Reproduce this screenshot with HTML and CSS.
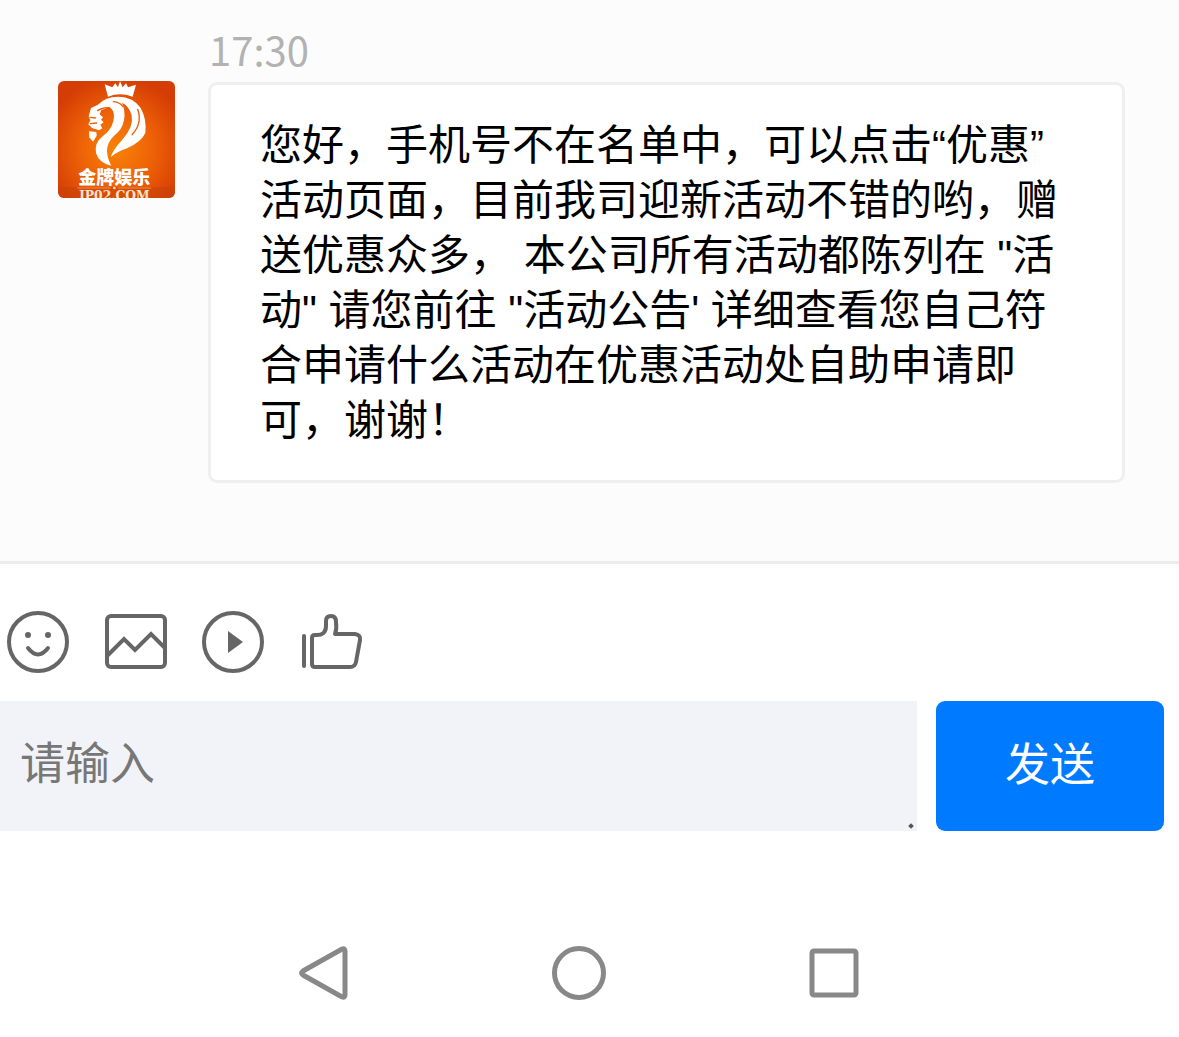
FILE: index.html
```html
<!DOCTYPE html>
<html lang="zh-CN">
<head>
<meta charset="utf-8">
<meta name="viewport" content="width=device-width, initial-scale=1">
<title>在线客服</title>
<link rel="stylesheet" href="styles.css">
</head>
<body>
<main class="chat">
  <article class="message">
    <svg class="avatar" viewBox="24 27 351 351" role="img" aria-label="金牌娱乐">
      <defs>
        <radialGradient id="glow" cx="50%" cy="58%" r="62%">
          <stop offset="0" stop-color="#f98208"/>
          <stop offset="0.5" stop-color="#ee6207"/>
          <stop offset="1" stop-color="#d43d05"/>
        </radialGradient>
      </defs>
      <rect x="24" y="27" width="351" height="351" fill="url(#glow)"/>
      <path d="M24 345H375V378H24Z" fill="#c94308" opacity=".6"/>
      <g fill="#fff">
        <path d="M174 74L164 37L187 46L196 34L204 46L210 27L218 46L228 34L234 46L258 38L248 74Q210 60 174 74Z"/>
        <path d="M116 133L123 108L144 98Q166 74 205 74Q250 75 272 108Q291 143 286 183Q274 210 231 229Q202 239 182 255Q191 230 217 203Q252 164 245 130Q237 101 216 92Q227 117 222 145Q217 172 194 190Q171 211 171 237Q172 260 184 281Q148 275 138 244Q132 213 158 193Q183 175 190 148Q197 119 179 105L154 114L149 127L159 136L153 143L161 151L151 158L157 169L147 175L126 168L115 157L121 145Z"/>
        <path d="M117 178L139 180L140 191L129 209L118 196Z"/>
      </g>
      <g fill="none" stroke="#e85f08" stroke-width="4" stroke-linecap="round">
        <path d="M143 116Q157 106 176 107M121 136L136 138M121 155L140 153M190 89Q211 91 219 104M263 112Q278 155 246 188"/>
      </g>
      <text class="avatar-name" x="193" y="335" text-anchor="middle">金牌娱乐</text>
      <path d="M82 348H182M204 348H304" stroke="#f5b878" stroke-width="2"/>
      <circle cx="193" cy="348" r="4" fill="#ffe4bd"/>
      <text class="avatar-site" x="193" y="383" text-anchor="middle">JP02.COM</text>
    </svg>
    <div class="message-main">
      <time class="message-time" datetime="17:30">17:30</time>
      <p class="bubble">您好，手机号不在名单中，可以点击“优惠”活动页面，目前我司迎新活动不错的哟，赠送优惠众多， 本公司所有活动都陈列在 "活动" 请您前往 "活动公告' 详细查看您自己符合申请什么活动在优惠活动处自助申请即可，谢谢！</p>
    </div>
  </article>
</main>

<form class="composer">
  <div class="tools">
    <button class="tool" type="button" aria-label="表情">
      <svg viewBox="0 0 64 64"><circle cx="32" cy="32" r="29"/><path d="M22 38Q32 51 42 38" stroke-linecap="round"/><g class="solid"><circle cx="22" cy="25" r="3"/><circle cx="42" cy="25" r="3"/></g></svg>
    </button>
    <button class="tool" type="button" aria-label="图片">
      <svg viewBox="0 0 64 64"><rect x="3" y="6" width="58" height="51" rx="4"/><path d="M3 46L20 29L31 40L47 24L61 38"/></svg>
    </button>
    <button class="tool" type="button" aria-label="视频">
      <svg viewBox="0 0 64 64"><circle cx="31" cy="32" r="29"/><path class="solid" d="M26 21L41 32L26 43Z"/></svg>
    </button>
    <button class="tool" type="button" aria-label="评价">
      <svg viewBox="0 0 64 64"><path d="M4 26V56" stroke-linecap="round"/><path d="M12 28Q12 25 15 25Q26 26 26 16V11Q26 6 31 6Q36 6 36 12Q37 19 35 24H55Q61 25 60 30L56 52Q55 57 50 57H15Q12 57 12 54Z" stroke-linejoin="round"/></svg>
    </button>
  </div>
  <div class="entry">
    <div class="field">
      <textarea class="input" placeholder="请输入" aria-label="请输入" rows="1"></textarea>
      <span class="grip"></span>
    </div>
    <button class="send" type="submit">发送</button>
  </div>
</form>

<nav class="system-nav" aria-label="系统导航">
  <button class="key" type="button" aria-label="返回"><svg viewBox="0 0 56 56"><path d="M47 4Q50 3 50 6V50Q50 53 47 52L8 30Q5 28 8 26Z"/></svg></button>
  <button class="key" type="button" aria-label="主页"><svg viewBox="0 0 56 56"><circle cx="28" cy="28" r="24.500"/></svg></button>
  <button class="key" type="button" aria-label="最近任务"><svg viewBox="0 0 56 56"><rect x="5" y="6" width="44" height="44" rx="2"/></svg></button>
</nav>
</body>
</html>
```

FILE: styles.css
```css
* {
  box-sizing: border-box;
}

body {
  margin: 0;
  background: #fff;
  color: #000;
  font-family: "Noto Sans CJK SC", sans-serif;
}

button {
  padding: 0;
  border: 0;
  background: none;
  font: inherit;
}

svg {
  display: block;
}

.chat {
  padding: 24px 54px 78px 58px;
  border-bottom: 3px solid #ececec;
  background: #fcfcfc;
}

.message {
  display: flex;
  align-items: flex-start;
  gap: 33px;
}

.avatar {
  flex: none;
  width: 117px;
  height: 117px;
  margin-top: 57px;
  border-radius: 6px;
}

.avatar-name {
  fill: #fff;
  font-size: 54px;
  font-weight: 900;
}

.avatar-site {
  fill: #ffe4cc;
  font-family: "DejaVu Serif", serif;
  font-size: 37px;
  font-weight: 700;
}

.message-main {
  flex: 1;
  min-width: 0;
}

.message-time {
  display: block;
  margin-bottom: 8px;
  padding-left: 1px;
  color: #b2b2b2;
  font-size: 40px;
  line-height: 50px;
}

.bubble {
  margin: 0;
  padding: 33px 48px 32px 49px;
  border: 3px solid #efefef;
  border-radius: 9px;
  background: #fff;
  font-family: "Liberation Sans", "Noto Sans CJK SC", sans-serif;
  font-size: 42px;
  line-height: 55px;
}

.composer {
  padding-top: 46px;
}

.tools {
  display: flex;
  gap: 34px;
  padding-left: 6px;
}

.tool svg {
  width: 64px;
  height: 64px;
  fill: none;
  stroke: #666;
  stroke-width: 4;
}

.tool .solid {
  fill: #666;
  stroke: none;
}

.entry {
  display: flex;
  gap: 19px;
  margin-top: 27px;
  padding-right: 15px;
}

.field {
  position: relative;
  display: flex;
  flex: 1;
}

.input {
  flex: 1;
  min-width: 0;
  height: 130px;
  padding: 27px 20px;
  border: 0;
  background: #f2f3f8;
  font: inherit;
  font-size: 45px;
  line-height: 66px;
  resize: none;
}

.input::placeholder {
  color: #777;
}

.grip {
  position: absolute;
  right: 4px;
  bottom: 3px;
  width: 4px;
  height: 4px;
  background: #555;
  transform: rotate(45deg);
}

.send {
  width: 228px;
  padding-bottom: 8px;
  border-radius: 9px;
  background: #007aff;
  color: #fff;
  font-size: 45px;
  line-height: 66px;
}

.system-nav {
  display: flex;
  justify-content: center;
  gap: 200px;
  padding: 114px 22px 36px 0;
}

.key svg {
  width: 56px;
  height: 56px;
  fill: none;
  stroke: #888;
  stroke-width: 5;
}
```
